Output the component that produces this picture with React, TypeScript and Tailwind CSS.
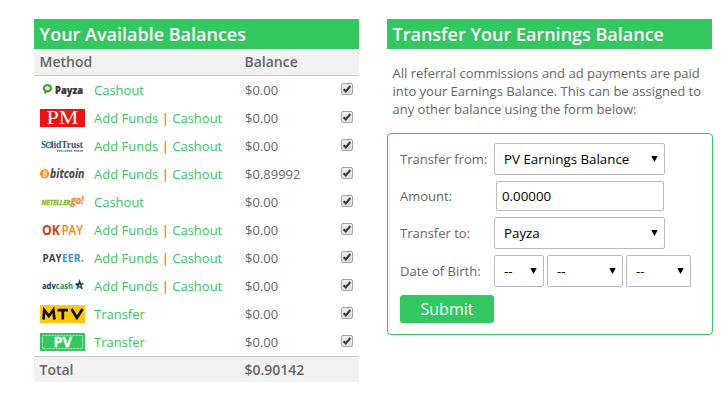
import type { ReactNode } from "react";

interface Method {
  name: string;
  logo: ReactNode;
  canFund?: boolean;
  action: string;
  balance: string;
}

function Logo({ children }: { children: ReactNode }) {
  return (
    <svg width="45" height="18" viewBox="0 0 45 18" className="block shrink-0 overflow-visible">
      {children}
    </svg>
  );
}

const methods: Method[] = [
  {
    name: "Payza",
    action: "Cashout",
    balance: "$0.00",
    logo: (
      <Logo>
        <path d="M4 9.5 4.8 13.2 7.5 11z" fill="#45a52f" />
        <ellipse cx="7.4" cy="7.3" rx="3.6" ry="3.1" fill="none" stroke="#45a52f" strokeWidth="2.3" />
        <text x="15" y="12.7" fontSize="10.5" fontWeight="800" fill="#383838" stroke="#383838" strokeWidth=".2" fontFamily="Open Sans, sans-serif" textLength="28" lengthAdjust="spacingAndGlyphs">Payza</text>
      </Logo>
    ),
  },
  {
    name: "Perfect Money",
    canFund: true,
    action: "Cashout",
    balance: "$0.00",
    logo: (
      <Logo>
        <rect width="45" height="18" fill="#ee1111" />
        <text x="6.5" y="15.3" fontSize="19" fill="#fff" fontFamily="Liberation Serif, serif" textLength="32" lengthAdjust="spacingAndGlyphs">PM</text>
      </Logo>
    ),
  },
  {
    name: "SolidTrust",
    canFund: true,
    action: "Cashout",
    balance: "$0.00",
    logo: (
      <Logo>
        <text x="1" y="11.3" fontSize="10" fontWeight="700" fill="#2c5688" fontFamily="Liberation Serif, serif" textLength="42" lengthAdjust="spacingAndGlyphs">SolidTrust</text>
        <circle cx="9" cy="8" r="2.6" fill="#fff" stroke="#3b79b0" strokeWidth="1.2" />
        <path d="M7.8 8l1 1 2.2-3" stroke="#c9974e" fill="none" strokeWidth=".9" />
        <path d="M17 13.9h6.5m1 0h8m1.2 0h9.3" stroke="#48637f" strokeWidth="1.8" strokeDasharray="1.6 .4" opacity=".75" />
      </Logo>
    ),
  },
  {
    name: "bitcoin",
    canFund: true,
    action: "Cashout",
    balance: "$0.89992",
    logo: (
      <Logo>
        <circle cx="4.6" cy="8.8" r="4.6" fill="#f7931a" />
        <path d="M3.5 6.2h1.9q1.3 0 1.1 1.2T5 8.7q1.6 0 1.4 1.3T4.7 11.4H2.9M4.1 6.3 3.4 11.4M3.8 8.7H5" fill="none" stroke="#fff" />
        <text x="10" y="12.7" fontSize="12" fontWeight="700" fontStyle="italic" fill="#4d4d4d" stroke="#4d4d4d" strokeWidth=".2" fontFamily="Open Sans, sans-serif" textLength="34.5" lengthAdjust="spacingAndGlyphs">bitcoin</text>
      </Logo>
    ),
  },
  {
    name: "NetellerGo",
    action: "Cashout",
    balance: "$0.00",
    logo: (
      <Logo>
        <text x="1.5" y="11.8" fontSize="7.5" fontWeight="700" fontStyle="italic" fill="#83bd2c" stroke="#83bd2c" strokeWidth=".4" fontFamily="Open Sans, sans-serif" textLength="29" lengthAdjust="spacingAndGlyphs">NETELLER</text>
        <text x="30.7" y="11.4" fontSize="10" fontWeight="700" fontStyle="italic" fill="#f28b2b" stroke="#f28b2b" strokeWidth=".3" fontFamily="Open Sans, sans-serif" textLength="13" lengthAdjust="spacingAndGlyphs">go!</text>
      </Logo>
    ),
  },
  {
    name: "OKPAY",
    canFund: true,
    action: "Cashout",
    balance: "$0.00",
    logo: (
      <Logo>
        <text x="2" y="14" fontSize="13.5" fontWeight="700" fill="#cf4312" fontFamily="Open Sans, sans-serif" textLength="18" lengthAdjust="spacingAndGlyphs">OK</text>
        <text x="21.5" y="14" fontSize="13.5" fontWeight="600" fill="#fa8500" fontFamily="Open Sans, sans-serif" textLength="21.5" lengthAdjust="spacingAndGlyphs">PAY</text>
      </Logo>
    ),
  },
  {
    name: "Payeer",
    canFund: true,
    action: "Cashout",
    balance: "$0.00",
    logo: (
      <Logo>
        <text x="2.5" y="12.8" fontSize="11" fontWeight="700" fill="#414448" fontFamily="Open Sans, sans-serif" textLength="19" lengthAdjust="spacingAndGlyphs">PAY</text>
        <text x="22" y="12.8" fontSize="11" fontWeight="700" fill="#3498e0" fontFamily="Open Sans, sans-serif" textLength="18.5" lengthAdjust="spacingAndGlyphs">EER</text>
        <circle cx="42.5" cy="11.8" r="1.1" fill="#8a8d91" />
      </Logo>
    ),
  },
  {
    name: "advcash",
    canFund: true,
    action: "Cashout",
    balance: "$0.00",
    logo: (
      <Logo>
        <text x="2" y="11.8" fontSize="9.5" fontWeight="700" fill="#12303a" fontFamily="Open Sans, sans-serif" textLength="31" lengthAdjust="spacingAndGlyphs">
          adv<tspan fill="#0d9b62">cash</tspan>
        </text>
        <path d="M35.5 7h8M37 12l2.5-8 2.7 8M36 7.5l6 4" fill="none" stroke="#14453f" strokeWidth="1.3" />
        <path d="M42 7.5l-5.5 4" stroke="#0d9b62" />
      </Logo>
    ),
  },
  {
    name: "MTV",
    action: "Transfer",
    balance: "$0.00",
    logo: (
      <Logo>
        <rect width="45" height="18" fill="#ffc80a" />
        <g fill="none" stroke="#0b0b12" strokeWidth="2.7">
          <path d="M3.4 14.5 4.3 5l4.5 6L13.3 5l1.2 9.5" />
          <path d="M17.5 5.2h10.5M22.8 5v9.5" />
          <path d="m31.5 4 5.4 8.8L42.5 4" />
        </g>
      </Logo>
    ),
  },
  {
    name: "PV",
    action: "Transfer",
    balance: "$0.00",
    logo: (
      <Logo>
        <rect width="45" height="18" fill="#33c85f" />
        <rect x="2.5" y="2.5" width="40" height="13" fill="none" stroke="#b5ecc5" strokeDasharray="2 1" />
        <text x="13.5" y="13.7" fontSize="13.5" fontWeight="700" fill="#fff" stroke="#fff" strokeWidth=".3" fontFamily="Open Sans, sans-serif" textLength="18.5" lengthAdjust="spacingAndGlyphs">PV</text>
      </Logo>
    ),
  },
];

function Checkbox() {
  return (
    <span className="flex h-3 w-3 items-center justify-center rounded-[2px] border border-[#a5a5a5] bg-linear-to-b from-[#eeeeee] to-[#dddddd]">
      <svg width="10" height="10" viewBox="0 0 10 10" className="shrink-0">
        <path d="M1.6 5.2 3.8 7.4 8.3 2" fill="none" stroke="#3f3f3f" strokeWidth="2.2" />
      </svg>
    </span>
  );
}

function PanelTitle({ children }: { children: ReactNode }) {
  return (
    <h2 className="h-[30px] w-[325px] bg-[#33c85f] pl-[5.5px] text-[18px] leading-[30px] font-semibold text-white">
      {children}
    </h2>
  );
}

function Select({ value, className }: { value: string; className: string }) {
  return (
    <div className={`flex h-8 items-center justify-between rounded-[2px] border border-[#bbbbbb] bg-white pr-1.5 pl-[9px] text-[13.333px] text-black ${className}`}>
      <span className="pt-px">{value}</span>
      <svg width="7" height="6" viewBox="0 0 7 6" className="mb-px">
        <path d="M.3 0h6.4L3.5 6z" />
      </svg>
    </div>
  );
}

function Balances() {
  return (
    <section className="w-[325px]">
      <PanelTitle>Your Available Balances</PanelTitle>
      <div className="flex h-[27px] border-b border-[#c6c6c6] bg-[#f2f2f2] pl-[5.5px] text-[14px] leading-[26px] font-semibold">
        <span className="w-[205px]">Method</span>
        <span>Balance</span>
      </div>
      {methods.map((m) => (
        <div key={m.name} className="flex h-7 items-center pr-1.5 pl-1.5">
          {m.logo}
          <div className="ml-[9px] w-[151px] pt-[2px] text-[#33c85f]">
            {m.canFund && (
              <>
                Add Funds <span className="text-[#ad6518]">|</span>{" "}
              </>
            )}
            {m.action}
          </div>
          <span className="flex-1 pt-[2px]">{m.balance}</span>
          <div className="mb-[2px]">
            <Checkbox />
          </div>
        </div>
      ))}
      <div className="flex h-[26px] border-t border-[#c6c6c6] bg-[#f2f2f2] pl-[5.5px] text-[14px] leading-[26px] font-semibold">
        <span className="w-[205px]">Total</span>
        <span>$0.90142</span>
      </div>
    </section>
  );
}

function TransferForm() {
  return (
    <section className="w-[326px]">
      <PanelTitle>Transfer Your Earnings Balance</PanelTitle>
      <p className="mt-[15px] pl-[5.5px] leading-[18px] whitespace-nowrap">
        All referral commissions and ad payments are paid
        <br />
        into your Earnings Balance. This can be assigned to
        <br />
        any other balance using the form below:
      </p>
      <div className="mt-[15px] h-[202px] rounded-[4px] border border-[#33c85f] pt-[9px] pl-3">
        <div className="flex items-center">
          <span className="w-[94px] pt-[2px]">Transfer from:</span>
          <Select value="PV Earnings Balance" className="w-[171px]" />
        </div>
        <div className="mt-1.5 flex items-center">
          <span className="w-24 pt-[2px]">Amount:</span>
          <div className="h-[30px] w-[168px] rounded-[2px] border border-[#bbbbbb] pl-[5px] text-[13.333px] leading-[29px] text-black">
            0.00000
          </div>
        </div>
        <div className="mt-1.5 flex items-center">
          <span className="w-[94px] pt-[2px]">Transfer to:</span>
          <Select value="Payza" className="w-[171px]" />
        </div>
        <div className="mt-1.5 flex items-center">
          <span className="w-[94px] pt-[2px]">Date of Birth:</span>
          <div className="flex gap-[3px]">
            <Select value="--" className="w-[50px]" />
            <Select value="--" className="w-[76px]" />
            <Select value="--" className="w-[65px]" />
          </div>
        </div>
        <button className="mt-2 block h-7 w-[94px] rounded-[3px] bg-[#33c85f] text-[16px] leading-7 text-white">
          Submit
        </button>
      </div>
    </section>
  );
}

export default function App() {
  return (
    <main className="flex h-[405px] w-[728px] gap-7 bg-white pt-[19px] pl-[34px] font-['Open_Sans',sans-serif] text-[13px] text-[#666666]">
      <Balances />
      <TransferForm />
    </main>
  );
}
